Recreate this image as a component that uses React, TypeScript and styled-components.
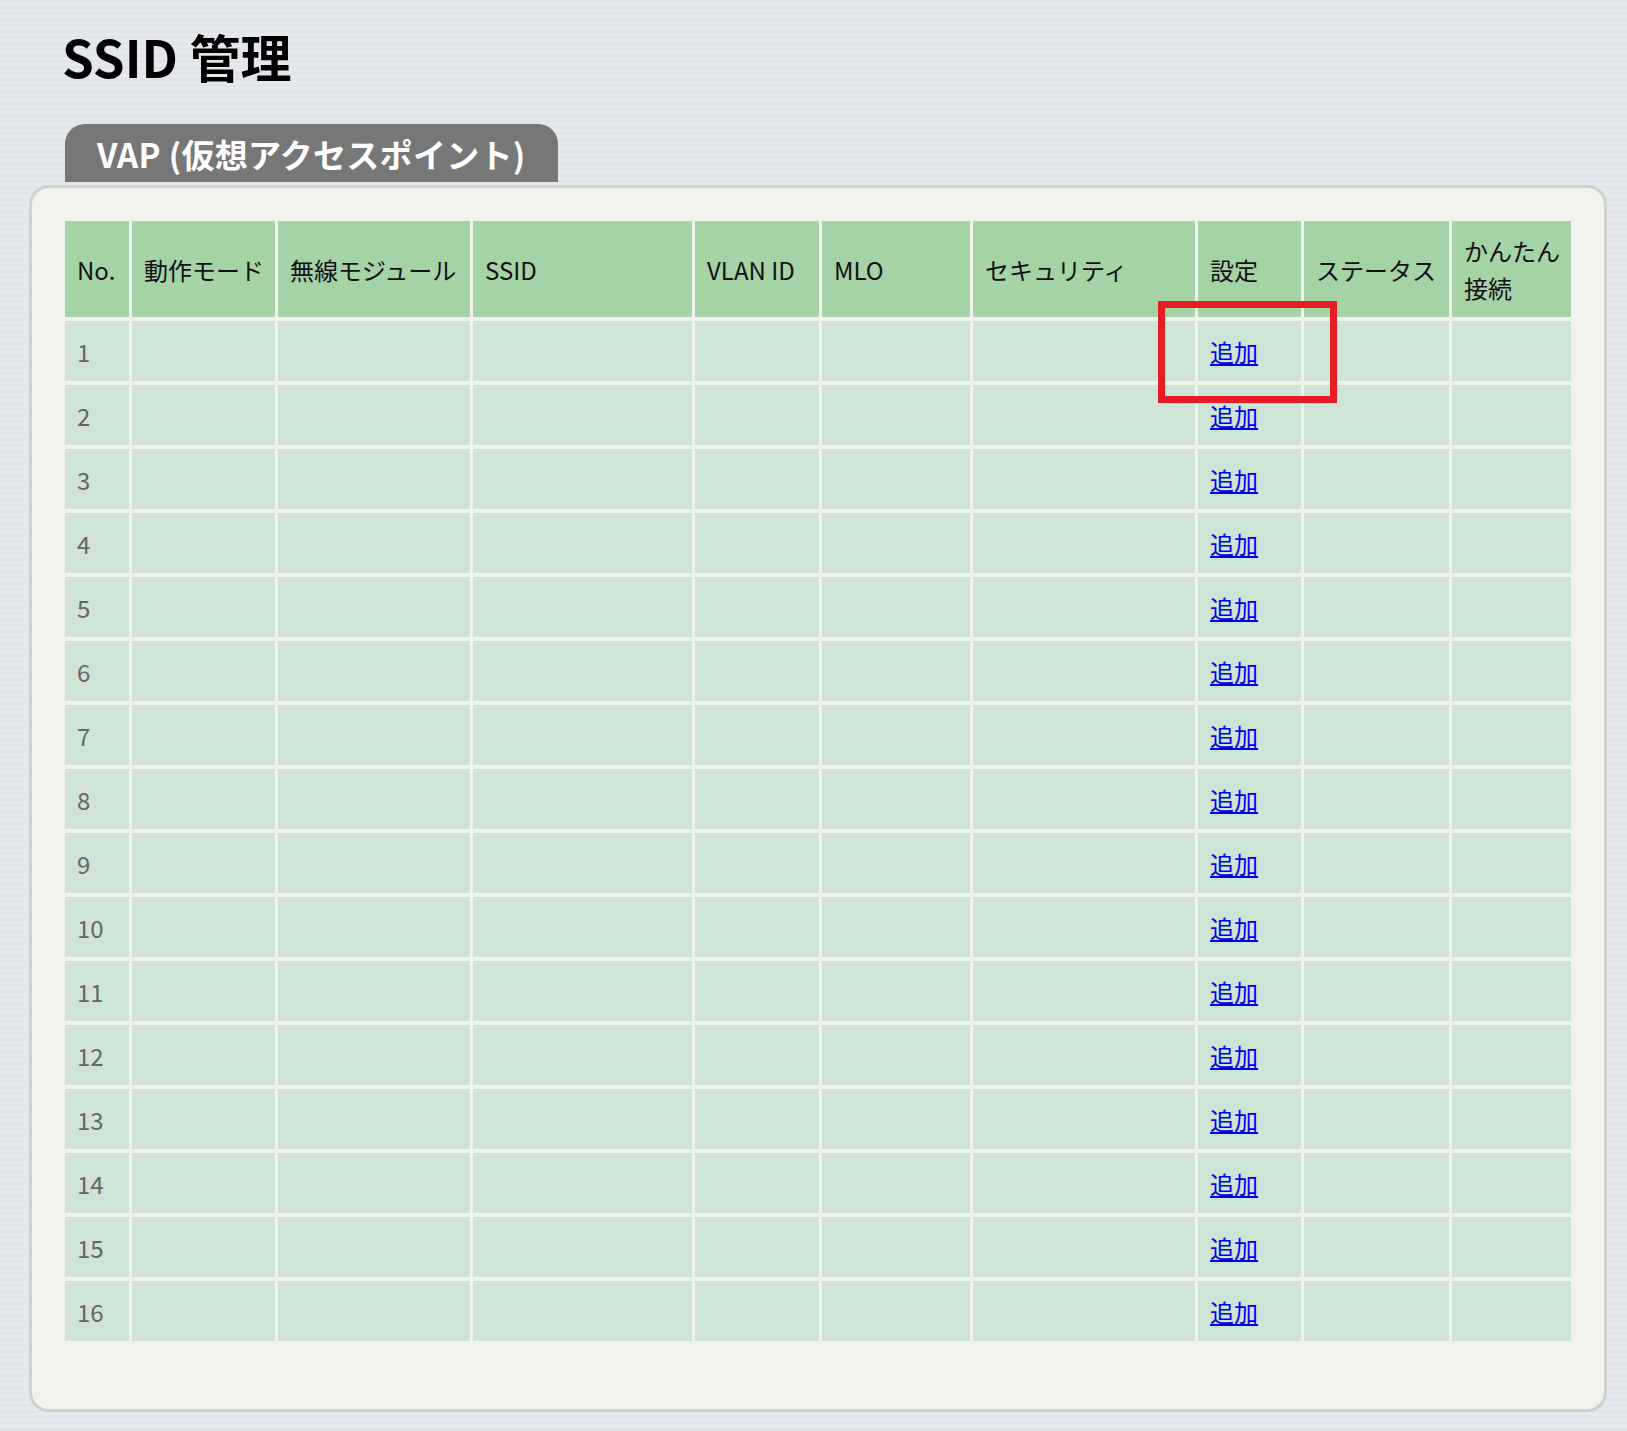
import React from "react";
import styled, { createGlobalStyle } from "styled-components";

const Global = createGlobalStyle`
  body { margin: 0; font-family: "Noto Sans CJK JP", "Noto Sans", sans-serif;
    background: repeating-linear-gradient(180deg, #e4e7eb 0px, #dfe2e7 2px, #e8ebee 4px, #e2e5e9 6px); }
`;

const Page = styled.div`
  width: 1627px; min-height: 1431px; padding: 0 0 0 29px; box-sizing: border-box;
`;
const Title = styled.h1`
  margin: 0; padding: 24px 0 0 33px; height: 102px; box-sizing: border-box;
  font-size: 51px; font-weight: 700; color: #000; line-height: 64px;
`;
const Tab = styled.div`
  margin-left: 36px; width: 493px; height: 58px; background: #777;
  border-radius: 20px 20px 0 0; color: #fff; font-size: 33px; font-weight: 700;
  padding-left: 32px; box-sizing: border-box; line-height: 60px; margin-top: 22px;
  letter-spacing: 0.3px;
`;
const Panel = styled.div`
  width: 1578px; box-sizing: border-box; background: #f1f2ec;
  border: 3px solid #cfd0cf; border-radius: 20px; margin-top: 3px;
  padding: 33px 33px 68px 33px; position: relative;
`;
const Table = styled.table`
  border-collapse: separate; border-spacing: 3px 4px; margin: -4px -3px;
  font-size: 24px;
`;
const Th = styled.th<{ w: number }>`
  width: ${p => p.w}px; height: 96px; background: #a5d3a5; color: #111;
  font-weight: 400; text-align: left; padding: 0 0 0 12px; box-sizing: border-box;
  line-height: 37px; vertical-align: middle;
`;
const Td = styled.td`
  height: 60px; background: #cee4d6; padding: 0 0 0 12px; color: #666;
  box-sizing: border-box;
`;
const Link = styled.a`
  color: #0000ee; text-decoration: underline;
`;
const Highlight = styled.div`
  position: absolute; left: 1126px; top: 113px; width: 179px; height: 102px;
  border: 7px solid #e81c24; box-sizing: border-box; pointer-events: none;
`;

const cols: [string, number][] = [
  ["No.", 64], ["動作モード", 143], ["無線モジュール", 192], ["SSID", 219],
  ["VLAN ID", 124], ["MLO", 148], ["セキュリティ", 222], ["設定", 103],
  ["ステータス", 145], ["かんたん接続", 119],
];

export default function App() {
  return (
    <Page>
      <Global />
      <Title>SSID 管理</Title>
      <Tab>VAP (仮想アクセスポイント)</Tab>
      <Panel>
        <Table>
          <thead>
            <tr>
              {cols.map(([t, w]) => (
                <Th key={t} w={w}>{t === "かんたん接続" ? <>かんたん<br />接続</> : t}</Th>
              ))}
            </tr>
          </thead>
          <tbody>
            {Array.from({ length: 16 }, (_, i) => (
              <tr key={i}>
                {cols.map(([t], j) => (
                  <Td key={t}>
                    {j === 0 ? i + 1 : j === 7 ? <Link href="#">追加</Link> : null}
                  </Td>
                ))}
              </tr>
            ))}
          </tbody>
        </Table>
        <Highlight />
      </Panel>
    </Page>
  );
}
